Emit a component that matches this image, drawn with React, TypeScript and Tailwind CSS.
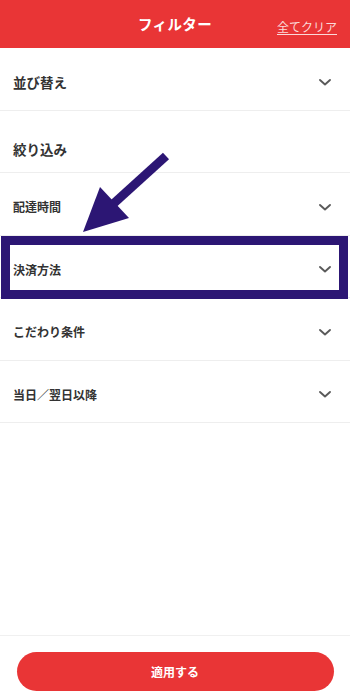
import React from 'react';

const font = { fontFamily: '"Noto Sans CJK JP", "Noto Sans", sans-serif' };

const Chevron: React.FC = () => (
    <svg width="14" height="9" viewBox="0 0 14 9" fill="none" className="text-[#5a5a5a]">
        <path d="M2 2 L7 6.5 L12 2" stroke="currentColor" strokeWidth="1.9" strokeLinecap="round" strokeLinejoin="round" />
    </svg>
);

const rows = [
    { label: '並び替え', big: true, chevron: true },
    { label: '絞り込み', big: true, chevron: false },
    { label: '配達時間', big: false, chevron: true },
    { label: '決済方法', big: false, chevron: true },
    { label: 'こだわり条件', big: false, chevron: true },
    { label: '当日／翌日以降', big: false, chevron: true },
];

const App: React.FC = () => {
    return (
        <div className="relative w-[350px] h-[695px] bg-white flex flex-col overflow-hidden" style={font}>
            {/* ヘッダー */}
            <div className="relative h-[48px] bg-[#e93536] flex items-center justify-center shrink-0">
                <span className="text-white font-bold text-[14.5px] tracking-wide">フィルター</span>
                <span className="absolute right-[13px] top-[18px] text-[12px] text-[#fbd9d9] underline underline-offset-2">全てクリア</span>
            </div>

            {/* 一覧 */}
            <div className="flex-1">
                {rows.map((r, i) => (
                    <div
                        key={r.label}
                        className={
                            'h-[62.5px] border-b border-[#eeeeee] flex items-center justify-between pl-[13px] pr-[18px] ' +
                            (i === 1 ? 'pt-[15px]' : 'pt-[7px]')
                        }
                    >
                        <span className={r.big ? 'text-[13.5px] font-bold text-[#333]' : 'text-[12px] font-semibold text-[#333]'}>
                            {r.label}
                        </span>
                        {r.chevron && <Chevron />}
                    </div>
                ))}
            </div>

            {/* フッター */}
            <div className="h-[60px] border-t border-[#f0f0f0] flex items-start justify-center pt-[16px] shrink-0">
                <button className="w-[317px] h-[39px] rounded-full bg-[#e93536] text-white text-[12px] font-bold">
                    適用する
                </button>
            </div>

            {/* 注釈の枠 */}
            <div className="absolute left-[1px] top-[236px] w-[347px] h-[63px] border-[9px] border-[#2c1674] pointer-events-none" />

            {/* 注釈の矢印 */}
            <svg className="absolute left-0 top-0 pointer-events-none" width="350" height="695" viewBox="0 0 350 695">
                <line x1="166" y1="156" x2="112" y2="205" stroke="#2c1674" strokeWidth="9" />
                <polygon points="83,232 100,187 129,218" fill="#2c1674" />
            </svg>
        </div>
    );
};

export default App;
